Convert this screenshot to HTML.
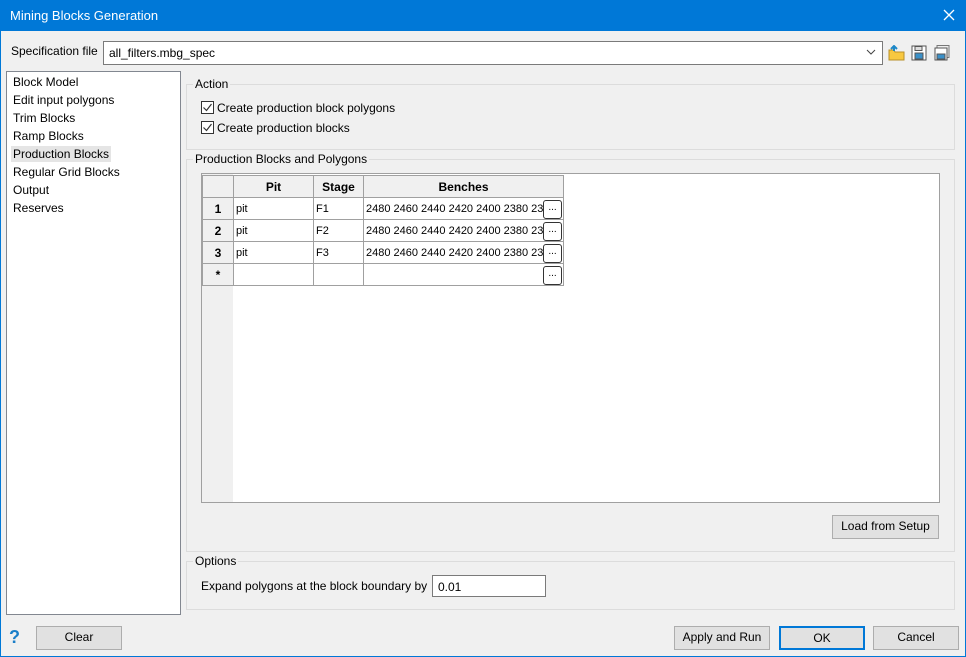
<!DOCTYPE html>
<html><head><style>
*{box-sizing:border-box;margin:0;padding:0}
body{width:966px;height:657px;background:#f0f0f0;font-family:"Liberation Sans",sans-serif;font-size:12px;color:#000;position:relative;overflow:hidden}
.a{position:absolute}
.win{position:absolute;left:0;top:0;width:966px;height:657px;border:1px solid #0078d7;border-top:none}
.title{left:0;top:0;width:966px;height:31px;background:#0078d7;color:#fff;font-size:13px;padding:8px 0 0 10px}
.grp{border:1px solid #dcdcdc}
.glab{background:#f0f0f0;padding:0 2px}
.btn{background:#e1e1e1;border:1px solid #adadad;text-align:center;line-height:21px}
.cb{width:13px;height:13px;border:1px solid #333;background:#fff}
table{border-collapse:collapse;position:absolute;left:202px;top:175px;table-layout:fixed}
td{border:1px solid #a0a0a0;height:22px;padding:0 2px;font-size:11px;white-space:nowrap;overflow:hidden;background:#fff}
td.h{background:#f0f0f0;text-align:center;font-weight:bold;font-size:12px}
.el{position:absolute;right:1px;top:2px;width:19px;height:19px;border:1px solid #333;border-radius:3px;background:#fff;font-size:10px;text-align:center;line-height:14px}
</style></head><body>
<div class="win"></div>
<div class="a title">Mining Blocks Generation</div>
<svg class="a" style="left:943px;top:9px" width="12" height="12"><path d="M1 1L11 11M11 1L1 11" stroke="#fff" stroke-width="1.3"/></svg>
<div class="a" style="left:11px;top:44px">Specification file</div>
<div class="a" style="left:103px;top:41px;width:780px;height:24px;background:#fff;border:1px solid #7a7a7a;padding:4px 5px">all_filters.mbg_spec</div>
<svg class="a" style="left:866px;top:47px" width="10" height="10"><path d="M1 3L5 7L9 3" stroke="#444" fill="none"/></svg>
<svg class="a" style="left:888px;top:45px" width="18" height="16"><path d="M1 5h5l1 2h9v8H1z" fill="#f8c840" stroke="#b8902a"/><path d="M6 1v5M3 4l3-3 3 3" stroke="#1e88c8" stroke-width="2" fill="none"/></svg>
<svg class="a" style="left:911px;top:45px" width="16" height="16"><rect x="1" y="1" width="14" height="14" fill="#fff" stroke="#555"/><rect x="4" y="1.5" width="7" height="4" fill="#ddd" stroke="#555"/><rect x="4" y="8" width="8" height="6" fill="#3a90c8" stroke="#555"/></svg>
<svg class="a" style="left:934px;top:45px" width="16" height="16"><rect x="3" y="0.5" width="12" height="12" fill="#eee" stroke="#777"/><rect x="1" y="3" width="12" height="12" fill="#fff" stroke="#555"/><rect x="3" y="9" width="8" height="5" fill="#3a90c8" stroke="#555"/></svg>
<div class="a" style="left:6px;top:71px;width:175px;height:544px;background:#fff;border:1px solid #828790"></div>
<div class="a" style="left:11px;top:146px;width:100px;height:16px;background:#e5e5e5"></div>
<div class="a" style="left:13px;top:73px;line-height:18px">Block Model<br>Edit input polygons<br>Trim Blocks<br>Ramp Blocks<br>Production Blocks<br>Regular Grid Blocks<br>Output<br>Reserves</div>
<div class="a grp" style="left:186px;top:84px;width:769px;height:66px"></div>
<div class="a glab" style="left:193px;top:77px">Action</div>
<div class="a cb" style="left:201px;top:101px"><svg width="11" height="11" style="display:block"><path d="M1.5 5.5L4.5 8.5L9.5 2" stroke="#333" fill="none" stroke-width="1.2"/></svg></div>
<div class="a" style="left:217px;top:101px">Create production block polygons</div>
<div class="a cb" style="left:201px;top:121px"><svg width="11" height="11" style="display:block"><path d="M1.5 5.5L4.5 8.5L9.5 2" stroke="#333" fill="none" stroke-width="1.2"/></svg></div>
<div class="a" style="left:217px;top:121px">Create production blocks</div>
<div class="a grp" style="left:186px;top:159px;width:769px;height:393px"></div>
<div class="a glab" style="left:193px;top:152px">Production Blocks and Polygons</div>
<div class="a" style="left:201px;top:173px;width:739px;height:330px;background:#fff;border:1px solid #a0a0a0"></div>
<div class="a" style="left:202px;top:174px;width:31px;height:328px;background:#f0f0f0"></div>
<table>
<colgroup><col style="width:31px"><col style="width:80px"><col style="width:50px"><col style="width:200px"></colgroup>
<tr><td class="h"></td><td class="h">Pit</td><td class="h">Stage</td><td class="h">Benches</td></tr>
<tr><td class="h">1</td><td>pit</td><td>F1</td><td style="position:relative">2480 2460 2440 2420 2400 2380 23<span class="el">...</span></td></tr>
<tr><td class="h">2</td><td>pit</td><td>F2</td><td style="position:relative">2480 2460 2440 2420 2400 2380 23<span class="el">...</span></td></tr>
<tr><td class="h">3</td><td>pit</td><td>F3</td><td style="position:relative">2480 2460 2440 2420 2400 2380 23<span class="el">...</span></td></tr>
<tr><td class="h">*</td><td></td><td></td><td style="position:relative"><span class="el">...</span></td></tr>
</table>
<div class="a btn" style="left:832px;top:515px;width:107px;height:24px">Load from Setup</div>
<div class="a grp" style="left:186px;top:561px;width:769px;height:49px"></div>
<div class="a glab" style="left:193px;top:554px">Options</div>
<div class="a" style="left:201px;top:579px">Expand polygons at the block boundary by</div>
<div class="a" style="left:432px;top:575px;width:114px;height:22px;background:#fff;border:1px solid #7a7a7a;padding:4px 5px">0.01</div>
<div class="a" style="left:9px;top:627px;color:#1a7ec8;font-weight:bold;font-size:18px">?</div>
<div class="a btn" style="left:36px;top:626px;width:86px;height:24px">Clear</div>
<div class="a btn" style="left:674px;top:626px;width:96px;height:24px">Apply and Run</div>
<div class="a btn" style="left:779px;top:626px;width:86px;height:24px;border:2px solid #0078d7;line-height:20px">OK</div>
<div class="a btn" style="left:873px;top:626px;width:86px;height:24px">Cancel</div>
</body></html>
